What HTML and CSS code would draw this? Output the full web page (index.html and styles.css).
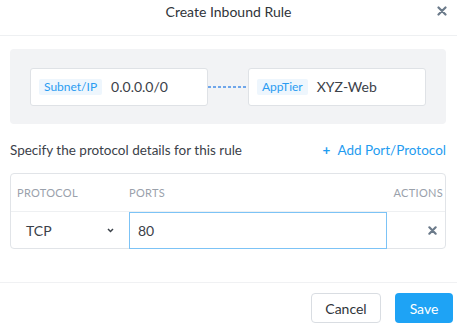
FILE: index.html
```html
<!DOCTYPE html>
<html>
<head>
  <meta charset="UTF-8">
  <title>Create Inbound Rule</title>
  <link rel="stylesheet" href="styles.css">
</head>
<body>
  <div class="modal">
    <div class="modal-header">
      <span></span>
      <h3>Create Inbound Rule</h3>
      <button type="button" class="close-btn" aria-label="Close">
        <svg width="10" height="10" viewBox="0 0 10 10"><path d="M1.5 1.5l7 7M8.5 1.5l-7 7" stroke="#6b7a8a" stroke-width="2.2" stroke-linecap="round"/></svg>
      </button>
    </div>

    <div class="modal-body">
      <!-- source -> target -->
      <div class="flow-panel">
        <div class="flow-box">
          <span class="tag">Subnet/IP</span>
          <span class="value">0.0.0.0/0</span>
        </div>
        <div class="connector"></div>
        <div class="flow-box">
          <span class="tag">AppTier</span>
          <span class="value">XYZ-Web</span>
        </div>
      </div>

      <div class="section-head">
        <span>Specify the protocol details for this rule</span>
        <a href="#" class="add-link"><span class="plus">+</span> Add Port/Protocol</a>
      </div>

      <div class="rule-table">
        <div class="row head-row">
          <div class="col-proto">PROTOCOL</div>
          <div class="col-ports">PORTS</div>
          <div class="col-actions">ACTIONS</div>
        </div>
        <div class="row body-row">
          <div class="col-proto proto-select">
            <span>TCP</span>
            <svg width="7" height="5" viewBox="0 0 7 5"><path d="M1 1l2.5 2.5L6 1" fill="none" stroke="#3b4149" stroke-width="1.5"/></svg>
          </div>
          <div class="col-ports"><input type="text" class="port-input" value="80"></div>
          <div class="col-actions">
            <svg width="9" height="9" viewBox="0 0 10 10"><path d="M1.5 1.5l7 7M8.5 1.5l-7 7" stroke="#6b7a8a" stroke-width="2.4" stroke-linecap="round"/></svg>
          </div>
        </div>
      </div>
    </div>

    <div class="modal-footer">
      <button type="button" class="cancel-btn">Cancel</button>
      <button type="button" class="save-btn">Save</button>
    </div>
  </div>
</body>
</html>
```

FILE: styles.css
```css
body {
  margin: 0;
  font-family: Lato, "Open Sans", Arial, sans-serif;
  background: white;
  color: #3b4149;
}
.modal {
  width: 457px;
  height: 328px;
  background: white;
}
.modal-header {
  display: grid;
  grid-template-columns: 1fr auto 1fr;
  align-items: center;
  height: 36px;
  border-bottom: 1px solid #eef0f2;
  padding: 0 10px;
  box-sizing: border-box;
}
.modal-header h3 {
  margin: 0;
  margin-top: -13px;
  font-size: 14px;
  font-weight: 400;
  color: #2f343a;
}
.close-btn {
  justify-self: end;
  margin-top: -13px;
  background: none;
  border: none;
  padding: 0;
  cursor: pointer;
  display: flex;
}
.modal-body {
  padding: 13px 11px 0 10px;
}
.flow-panel {
  display: flex;
  align-items: center;
  height: 75px;
  padding: 0 20px;
  background: #f2f3f5;
  border-radius: 4px;
  box-sizing: border-box;
}
.flow-box {
  display: flex;
  align-items: center;
  width: 178px;
  height: 38px;
  padding: 0 8px;
  background: white;
  border: 1px solid #dfe2e6;
  border-radius: 3px;
  box-sizing: border-box;
}
.connector {
  flex: 1;
  height: 2px;
  background: repeating-linear-gradient(90deg, #6fa6ea 0 3px, transparent 3px 5px);
}
.tag {
  padding: 1px 5px;
  background: #eef6fd;
  color: #2a9cf2;
  font-size: 12px;
  border-radius: 2px;
  line-height: 14px;
}
.value {
  margin-left: 9px;
  font-size: 14px;
  color: #3b4149;
}
.section-head {
  display: flex;
  justify-content: space-between;
  align-items: center;
  margin: 18px 0 15px;
  font-size: 13.5px;
  color: #3b4149;
}
.add-link {
  color: #1f9cf0;
  text-decoration: none;
}
.plus {
  font-weight: 700;
  margin-right: 4px;
}
.rule-table {
  border: 1px solid #e1e4e8;
  border-radius: 4px;
}
.row {
  display: flex;
  align-items: center;
}
.head-row {
  height: 37px;
  border-bottom: 1px solid #eef0f2;
  font-size: 11px;
  color: #9aa1ab;
  letter-spacing: 0.3px;
}
.body-row {
  height: 36px;
}
.col-proto {
  width: 118px;
  padding-left: 6px;
  box-sizing: border-box;
}
.col-ports {
  width: 258px;
  height: 100%;
  display: flex;
  align-items: center;
}
.col-actions {
  flex: 1;
  padding-right: 2px;
  display: flex;
  justify-content: flex-end;
  align-items: center;
}
.body-row .col-actions {
  padding-right: 8px;
}
.proto-select {
  display: flex;
  align-items: center;
  justify-content: space-between;
  padding: 0 15px 0 15px;
  font-size: 14px;
}
.port-input {
  width: 100%;
  height: 37px;
  margin-bottom: -1px;
  padding: 0 8px;
  border: 1px solid #7cc3f6;
  font-family: inherit;
  font-size: 14px;
  color: #3b4149;
  box-sizing: border-box;
  outline: none;
}
.modal-footer {
  display: flex;
  justify-content: flex-end;
  gap: 14px;
  margin-top: 33px;
  padding: 10px 4px 0 0;
  border-top: 1px solid #f0f1f3;
}
.cancel-btn, .save-btn {
  height: 30px;
  border-radius: 4px;
  font-family: inherit;
  font-size: 14px;
  cursor: pointer;
}
.cancel-btn {
  width: 70px;
  background: white;
  border: 1px solid #d9dde2;
  color: #2f343a;
}
.save-btn {
  width: 58px;
  background: #1ea3f5;
  border: none;
  color: white;
}
```
